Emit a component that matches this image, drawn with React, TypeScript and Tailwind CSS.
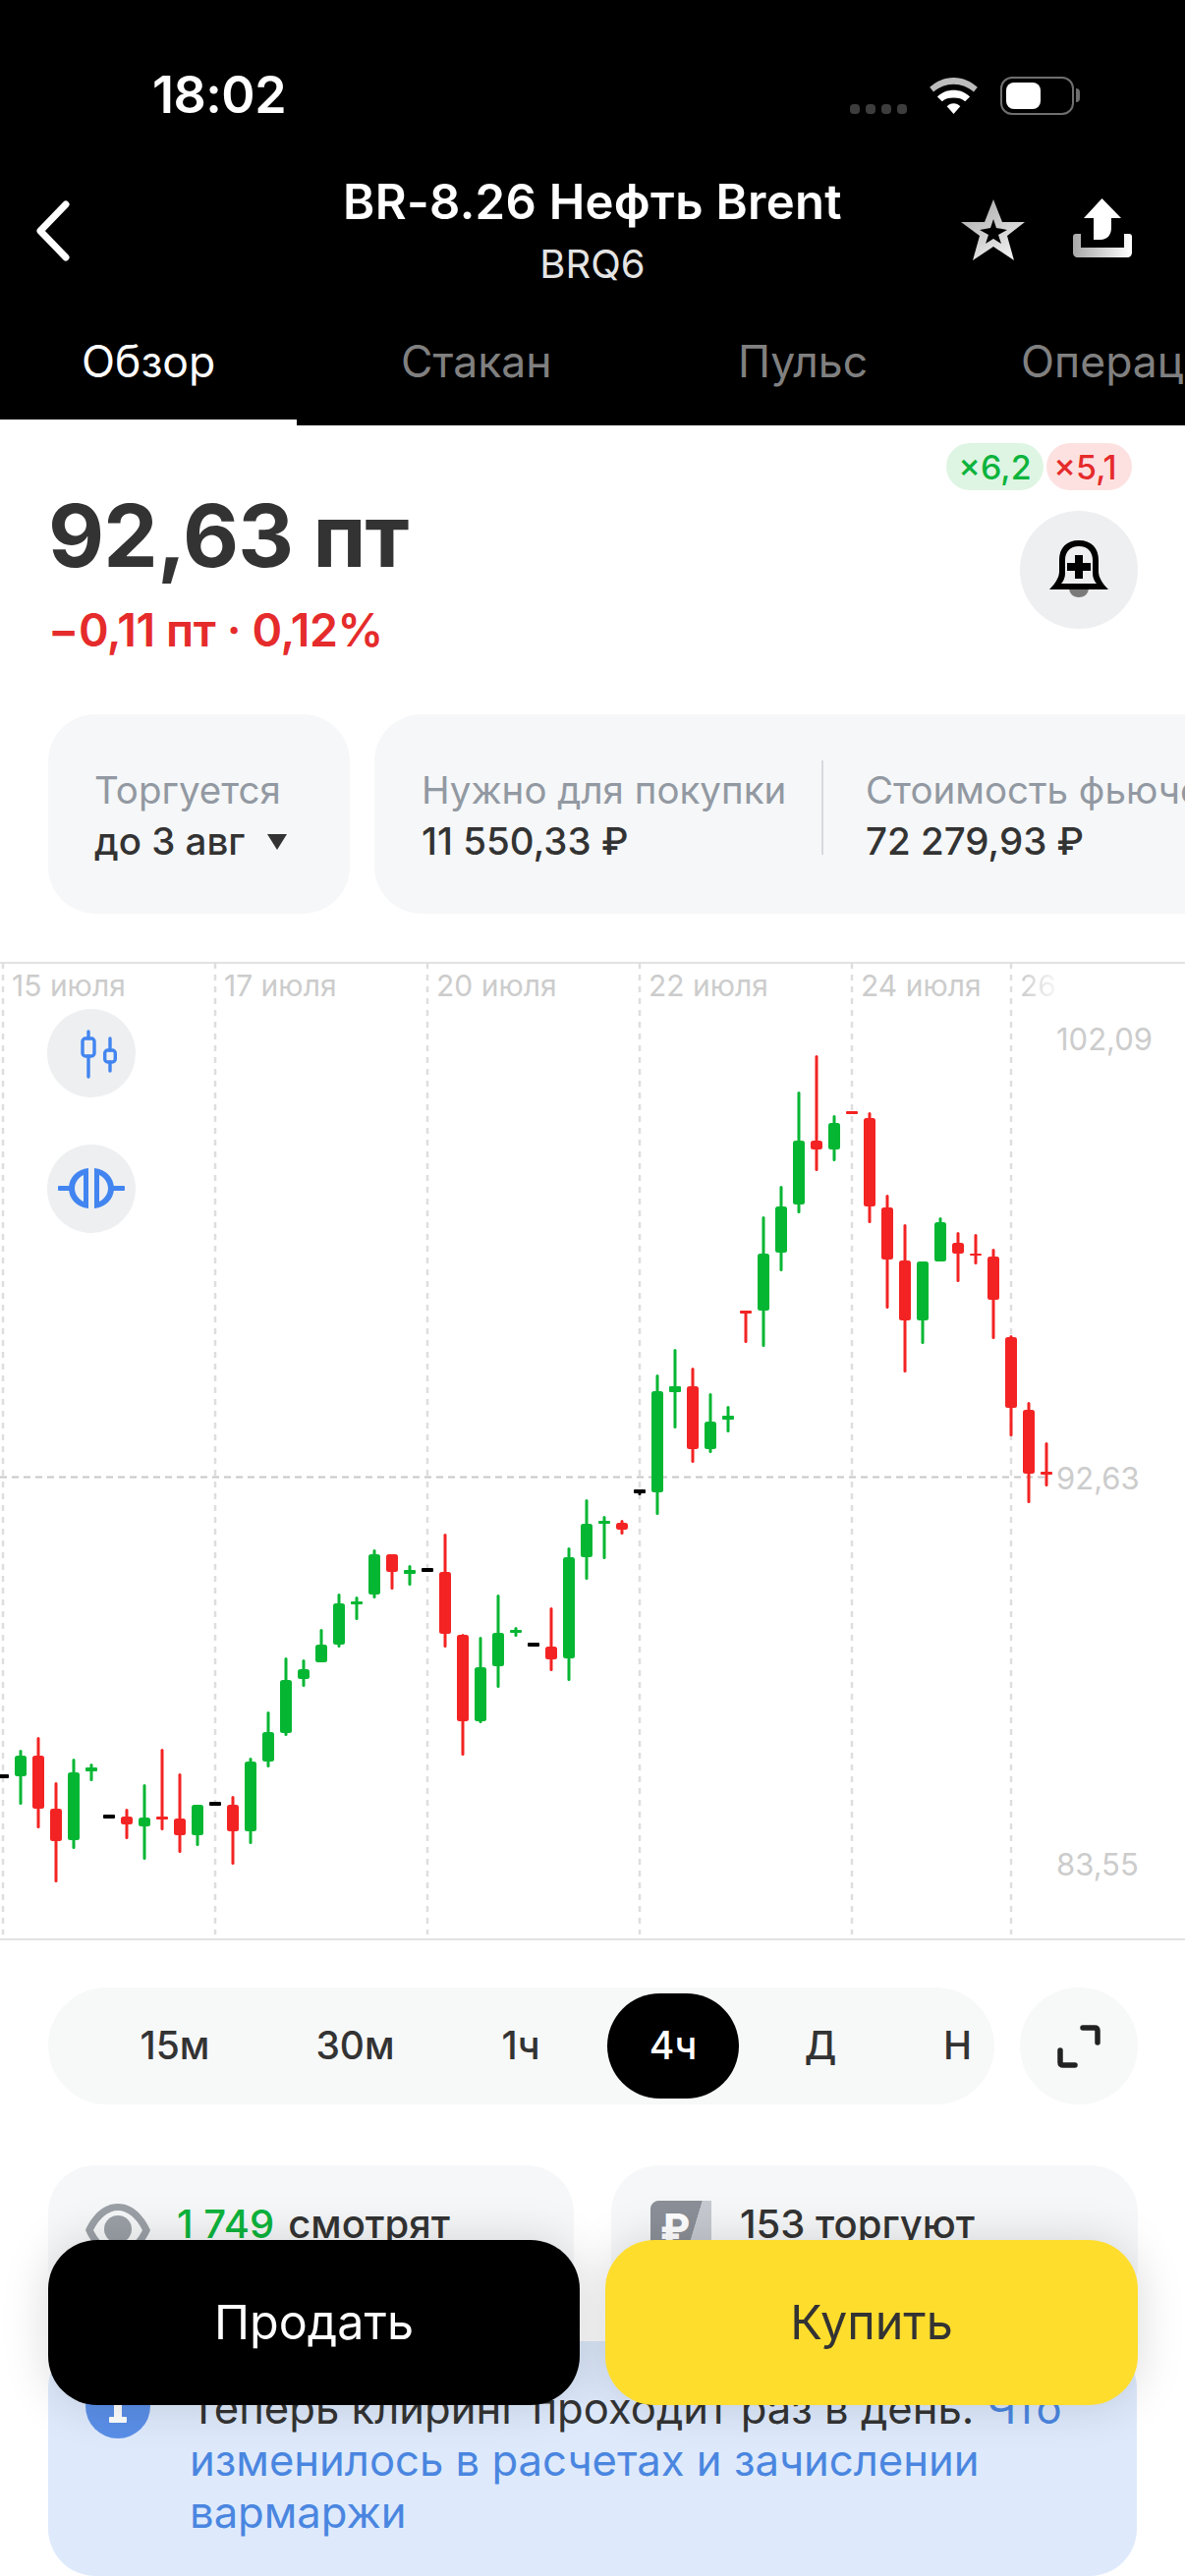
const font = { fontFamily: "Inter, 'Noto Sans', sans-serif" };

type Candle = { x: number; top: number; bottom: number; y1: number; y2: number; color: "g" | "r" | "k" };

const colors = { g: "#05b633", r: "#f32323", k: "#000000" };

// i: index on the 18px candle grid, then wick top/bottom and body top/bottom in page pixels
const raw: [number, number, number, number, number, "g" | "r" | "k"][] = [
  [0, 1808, 1808, 1806, 1810, "k"],
  [1, 1781, 1837, 1787, 1808, "g"],
  [2, 1768, 1861, 1787, 1841, "r"],
  [3, 1814, 1916, 1841, 1874, "r"],
  [4, 1790, 1882, 1804, 1873, "g"],
  [5, 1795, 1813, 1799, 1803, "g"],
  [6, 1849, 1849, 1847, 1851, "k"],
  [7, 1841, 1872, 1849, 1857, "r"],
  [8, 1816, 1893, 1850, 1859, "g"],
  [9, 1780, 1863, 1849, 1852, "r"],
  [10, 1805, 1886, 1851, 1868, "r"],
  [11, 1837, 1879, 1837, 1868, "g"],
  [12, 1836, 1836, 1834, 1838, "k"],
  [13, 1828, 1898, 1837, 1864, "r"],
  [14, 1789, 1877, 1793, 1864, "g"],
  [15, 1742, 1799, 1763, 1793, "g"],
  [16, 1687, 1767, 1710, 1764, "g"],
  [17, 1689, 1717, 1699, 1709, "g"],
  [18, 1658, 1692, 1674, 1692, "g"],
  [19, 1622, 1677, 1632, 1674, "g"],
  [20, 1625, 1649, 1630, 1633, "g"],
  [21, 1577, 1627, 1582, 1623, "g"],
  [22, 1582, 1618, 1582, 1600, "r"],
  [23, 1593, 1614, 1598, 1602, "g"],
  [24, 1598, 1598, 1596, 1600, "k"],
  [25, 1561, 1677, 1600, 1663, "r"],
  [26, 1663, 1787, 1664, 1752, "r"],
  [27, 1666, 1754, 1697, 1752, "g"],
  [28, 1623, 1718, 1662, 1696, "g"],
  [29, 1656, 1666, 1659, 1662, "g"],
  [30, 1674, 1674, 1672, 1676, "k"],
  [31, 1636, 1701, 1676, 1689, "r"],
  [32, 1575, 1711, 1585, 1688, "g"],
  [33, 1526, 1608, 1551, 1585, "g"],
  [34, 1543, 1587, 1548, 1551, "g"],
  [35, 1547, 1562, 1550, 1557, "r"],
  [36, 1517, 1522, 1516, 1520, "k"],
  [37, 1399, 1542, 1416, 1519, "g"],
  [38, 1373, 1454, 1411, 1417, "g"],
  [39, 1392, 1489, 1411, 1475, "r"],
  [40, 1418, 1479, 1447, 1475, "g"],
  [41, 1431, 1458, 1441, 1445, "g"],
  [42, 1335, 1367, 1334, 1337, "r"],
  [43, 1238, 1371, 1276, 1334, "g"],
  [44, 1207, 1294, 1228, 1275, "g"],
  [45, 1111, 1235, 1161, 1226, "g"],
  [46, 1074, 1192, 1161, 1170, "r"],
  [47, 1135, 1182, 1143, 1170, "g"],
  [48, 1132, 1132, 1131, 1134, "r"],
  [49, 1132, 1245, 1138, 1228, "r"],
  [50, 1216, 1332, 1229, 1282, "r"],
  [51, 1246, 1397, 1283, 1344, "r"],
  [52, 1284, 1368, 1284, 1344, "g"],
  [53, 1239, 1284, 1244, 1284, "g"],
  [54, 1254, 1305, 1265, 1276, "r"],
  [55, 1256, 1287, 1276, 1278, "r"],
  [56, 1271, 1363, 1279, 1323, "r"],
  [57, 1359, 1462, 1361, 1433, "r"],
  [58, 1427, 1530, 1435, 1500, "r"],
  [59, 1468, 1513, 1498, 1501, "r"],
];

const candles: Candle[] = raw.map(([i, top, bottom, y1, y2, color]) => ({ x: 3 + i * 18, top, bottom, y1, y2, color }));

const gridX = [3, 219, 435, 651, 867, 1029];

function Chart() {
  return (
    <svg viewBox="0 979 1206 996" className="block h-[996px] w-[1206px]">
      <line x1={0} x2={1206} y1={980} y2={980} stroke="#e2e2e2" strokeWidth="2" />
      <line x1={0} x2={1206} y1={1974} y2={1974} stroke="#e2e2e2" strokeWidth="2" />
      {gridX.map((x) => (
        <line key={x} x1={x} x2={x} y1={980} y2={1969} stroke="#dedede" strokeWidth="2.5" strokeDasharray="6 6" />
      ))}
      <line x1={0} x2={1066} y1={1503.5} y2={1503.5} stroke="#c8c8c8" strokeWidth="2" strokeDasharray="7 5" />
      {candles.map((c) => (
        <g key={c.x}>
          {c.bottom > c.top && <rect x={c.x - 1.5} y={c.top} width={3} height={c.bottom - c.top} rx={1.5} fill={colors[c.color]} />}
          <rect x={c.x - 6} y={c.y1} width={12} height={c.y2 - c.y1} rx={c.y2 - c.y1 > 6 ? 2.5 : 1} fill={colors[c.color]} />
        </g>
      ))}
    </svg>
  );
}

function CandlesIcon() {
  return (
    <svg viewBox="0 0 60 60" className="h-[60px] w-[60px]" fill="none" stroke="#4285f0" strokeWidth="3.4" strokeLinecap="round">
      <path d="M27 8v7M27 33v21" />
      <rect x="21" y="15" width="12" height="18" rx="3" />
      <path d="M49 15v12M49 39v9" />
      <rect x="43.7" y="27" width="10.6" height="12" rx="3" />
    </svg>
  );
}

function SplitIcon() {
  return (
    <svg viewBox="0 0 76 60" className="h-[60px] w-[76px]" fill="#4285f0">
      <rect x="4" y="27" width="14" height="5" rx="1" />
      <rect x="58" y="27" width="14" height="5" rx="1" />
      <path fillRule="evenodd" d="M35 9v41c-12-1-20-10-20-20.500S23 10 35 9Zm-5 7c-5 2-9 8-9 13.500s4 11.500 9 13.500V16Z" />
      <path fillRule="evenodd" d="M41 9v41c12-1 20-10 20-20.500S53 10 41 9Zm5 7c5 2 9 8 9 13.500s-4 11.500-9 13.500V16Z" />
    </svg>
  );
}

function StatusIcons() {
  return (
    <div className="flex items-start">
      <div className="mt-[28px] flex gap-[6px]">
        {[0, 1, 2, 3].map((i) => (
          <span key={i} className="h-[10px] w-[10px] rounded-[4px] bg-[#3d3d3d]" />
        ))}
      </div>
      <svg viewBox="0 0 50 38" className="ml-[22px] mt-[1px] h-[37px] w-[51px]" fill="white">
        <path d="M25 0c10 0 18 4 25 10l-4 5C40 10 33 7 25 7S10 10 4 15L0 10C7 4 15 0 25 0Z" fill="#bcbcbc" />
        <path d="M25 13c6 0 12 2 17 7l-5 5c-3-3-7-4-12-4s-9 1-12 4l-5-5c5-5 11-7 17-7Z" />
        <path d="M25 27c3 0 5 1 7 3l-7 8-7-8c2-2 4-3 7-3Z" />
      </svg>
      <div className="relative ml-[22px] h-[39px] w-[75px] rounded-[12px] border-2 border-[#6f6f6f]">
        <div className="ml-[4px] mt-[4px] h-[27px] w-[35px] rounded-[8px] bg-white" />
        <div className="absolute left-[75px] top-[10px] h-[14px] w-[4px] rounded-r-full bg-[#6f6f6f]" />
      </div>
    </div>
  );
}

function Header() {
  return (
    <div className="h-[433px] bg-black text-white">
      <div className="flex h-[180px] items-start justify-between pl-[155px] pr-[113px] pt-[70px]">
        <span className="text-[52px] font-semibold leading-[54px] tracking-[-0.5px]">18:02</span>
        <div className="pt-[8px]">
          <StatusIcons />
        </div>
      </div>
      <div className="relative flex h-[130px] flex-col items-center">
        <span className="text-[49px] font-semibold leading-[52px] tracking-[0.3px]">BR-8.26 Нефть Brent</span>
        <span className="mt-[15px] text-[40px] leading-[44px] text-[#e4e4e4]">BRQ6</span>
        <svg viewBox="0 0 36 62" className="absolute left-[35px] top-[24px] h-[62px] w-[36px]" fill="none" stroke="white" strokeWidth="7" strokeLinecap="round" strokeLinejoin="round">
          <path d="M32 4 6 31l26 27" />
        </svg>
        <svg viewBox="0 0 65 62" className="absolute left-[978px] top-[23px] h-[62px] w-[65px]">
          <defs>
            <linearGradient id="starFill" x1="0" y1="0" x2="0.6" y2="1">
              <stop offset="0" stopColor="#a4a4a4" />
              <stop offset="1" stopColor="#eeeeee" />
            </linearGradient>
          </defs>
          <path d="M33 0 42 23 65 23 47 37 54 62 33 48 12 62 19 37 0 23 24 23Z" fill="url(#starFill)" />
          <path d="M33 20 36 29 47 31 38 36 41 45 33 40 25 45 28 36 19 31 30 29Z" fill="black" />
        </svg>
        <svg viewBox="0 0 60 60" className="absolute left-[1092px] top-[22px] h-[60px] w-[60px]">
          <defs>
            <linearGradient id="trayFill" x1="0" y1="0" x2="1" y2="0">
              <stop offset="0" stopColor="#a8a8a8" />
              <stop offset="1" stopColor="#ffffff" />
            </linearGradient>
          </defs>
          <path d="M29.500 0 49 20H39V30C39 37 35 42 28 42H21V20H11Z" fill="white" />
          <path d="M3 36h5v14h44V36h5c2 0 3 1 3 3v16c0 3-2 5-5 5H5c-3 0-5-2-5-5V39c0-2 1-3 3-3Z" fill="url(#trayFill)" />
        </svg>
      </div>
      <div className="flex h-[117px] whitespace-nowrap pl-[83px] text-[44.5px] leading-[116px] text-[#808080]">
        <span className="w-[325px] shrink-0 text-white">Обзор</span>
        <span className="w-[343px] shrink-0">Стакан</span>
        <span className="w-[288px] shrink-0">Пульс</span>
        <span className="shrink-0">Операции</span>
      </div>
      <div className="h-[6px] w-[302px] bg-white" />
    </div>
  );
}

function PriceBlock() {
  return (
    <div className="relative h-[294px] bg-white">
      <div className="absolute left-[963px] top-[18px] flex gap-[3px] text-[34px] font-medium">
        <span className="flex h-[48px] w-[99px] items-center justify-center rounded-[24px] bg-[#def5e3] text-[#0cb33c]">×6,2</span>
        <span className="flex h-[48px] w-[87px] items-center justify-center rounded-[24px] bg-[#fde1e1] pr-[8px] text-[#e52b2b]">×5,1</span>
      </div>
      <div className="flex items-start justify-between pl-[49px] pr-[48px]">
        <div className="flex flex-col pt-[62px]">
          <span className="text-[88px] font-bold leading-[100px] tracking-[-0.8px] text-[#333333]">92,63 пт</span>
          <span className="mt-[21px] text-[46.5px] font-semibold leading-[50px] tracking-[-0.4px] text-[#e52b2b]">−0,11 пт · 0,12%</span>
        </div>
        <div className="mt-[87px] flex h-[120px] w-[120px] items-center justify-center rounded-full bg-[#eeeff1]">
          <svg viewBox="0 0 60 60" className="h-[60px] w-[60px]">
            <path d="M20 48h20c0 6-4 10-10 10s-10-4-10-10Z" fill="#7a7a7a" />
            <path fillRule="evenodd" d="M30 0c13 0 20 8 20 20v12c0 6 5 13 10 18H0c5-5 10-12 10-18V20C10 8 17 0 30 0Zm0 6c-9 0-14 6-14 14v14c0 4-2 8-4 10h36c-2-2-4-6-4-10V20c0-8-5-14-14-14Z" fill="#000000" />
            <path d="M26 15h8v8h8v8h-8v8h-8v-8h-8v-8h8Z" fill="#000000" />
          </svg>
        </div>
      </div>
    </div>
  );
}

function InfoCards() {
  return (
    <div className="flex h-[252px] gap-[25px] overflow-hidden bg-white pl-[49px] text-[38.5px] leading-[44px]">
      <div className="flex h-[203px] w-[307px] shrink-0 flex-col rounded-[48px] bg-[#f6f7f8] pl-[47px] pt-[55px]">
        <span className="text-[#9299a2]">Торгуется</span>
        <span className="mt-[8px] flex items-center font-medium text-[#333333]">
          до 3 авг
          <svg viewBox="0 0 22 18" className="ml-[22px] mt-[2px] h-[18px] w-[22px]" fill="#333333">
            <path d="M1 1h20L11 17Z" />
          </svg>
        </span>
      </div>
      <div className="flex h-[203px] w-[900px] shrink-0 items-start rounded-[48px] bg-[#f6f7f8] pl-[48px] pt-[55px]">
        <div className="flex w-[407px] shrink-0 flex-col">
          <span className="whitespace-nowrap text-[#9299a2]">Нужно для покупки</span>
          <span className="mt-[8px] font-medium text-[#333333]">11 550,33 ₽</span>
        </div>
        <div className="mt-[-8px] h-[96px] w-[2px] shrink-0 bg-[#d6d9dd]" />
        <div className="flex flex-col whitespace-nowrap pl-[43px]">
          <span className="text-[#9299a2]">Стоимость фьючерса</span>
          <span className="mt-[8px] font-medium text-[#333333]">72 279,93 ₽</span>
        </div>
      </div>
    </div>
  );
}

function ChartBlock() {
  const dates = ["15 июля", "17 июля", "20 июля", "22 июля", "24 июля"];
  return (
    <div className="relative h-[996px] bg-white">
      <Chart />
      <div className="absolute left-[12px] top-[6px] flex text-[30px] leading-[36px] text-[#cccccc]">
        {dates.map((d, i) => (
          <span key={d} className={i === 4 ? "w-[162px]" : "w-[216px]"}>
            {d}
          </span>
        ))}
        <span className="w-[44px] overflow-hidden bg-gradient-to-r from-[#cccccc] to-white bg-clip-text text-transparent">26</span>
      </div>
      <div className="absolute left-[48px] top-[48px] flex flex-col gap-[48px]">
        <div className="flex h-[90px] w-[90px] items-center justify-center rounded-full bg-[#edeff1]">
          <CandlesIcon />
        </div>
        <div className="flex h-[90px] w-[90px] items-center justify-center rounded-full bg-[#edeff1]">
          <SplitIcon />
        </div>
      </div>
      <span className="absolute left-[1075px] top-[61px] text-[31px] leading-[36px] text-[#cccccc]">102,09</span>
      <span className="absolute left-[1075px] top-[508px] text-[31px] leading-[36px] text-[#cccccc]">92,63</span>
      <span className="absolute left-[1075px] top-[901px] text-[31px] leading-[36px] text-[#cccccc]">83,55</span>
    </div>
  );
}

function Periods() {
  return (
    <div className="flex gap-[26px] bg-white pl-[49px] pt-[48px]">
      <div className="flex h-[119px] w-[963px] items-center overflow-hidden whitespace-nowrap rounded-[60px] bg-[#f7f8f8] pl-[41px] text-center text-[39px] font-medium text-[#333333]">
        <span className="w-[176px] shrink-0">15м</span>
        <span className="w-[191px] shrink-0">30м</span>
        <span className="w-[146px] shrink-0">1ч</span>
        <span className="ml-[15px] flex h-[107px] w-[134px] shrink-0 items-center justify-center rounded-[54px] bg-black text-white">4ч</span>
        <span className="w-[166px] shrink-0">Д</span>
        <span className="w-[113px] shrink-0">Н</span>
      </div>
      <div className="flex h-[119px] w-[120px] items-center justify-center rounded-full bg-[#f7f8f8]">
        <svg viewBox="0 0 44 44" className="h-[44px] w-[44px]" fill="none" stroke="#222222" strokeWidth="5.500" strokeLinecap="round" strokeLinejoin="round">
          <path d="M26 3h12c2 0 3 1 3 3v12M18 41H6c-2 0-3-1-3-3V26" />
        </svg>
      </div>
    </div>
  );
}

function Stats() {
  return (
    <div className="flex gap-[38px] bg-white pl-[49px] pt-[62px] text-[40px] font-medium leading-[46px] text-[#333333]">
      <div className="flex h-[150px] w-[535px] items-start whitespace-nowrap rounded-[48px] bg-[#f6f7f8] pl-[38px] pt-[37px]">
        <svg viewBox="0 0 66 54" className="mt-[2px] h-[54px] w-[66px]" fill="#9aa0a6">
          <path fillRule="evenodd" d="M33 0c14 0 26 11 33 27-7 16-19 27-33 27S7 43 0 27C7 11 19 0 33 0Zm0 7C23 7 14 15 8 27c6 12 15 20 25 20s19-8 25-20C52 15 43 7 33 7Z" />
          <circle cx="33" cy="26" r="14" />
        </svg>
        <span className="ml-[27px] text-[#0cb33c]">1 749</span>
        <span className="ml-[14px]">смотрят</span>
      </div>
      <div className="flex h-[150px] w-[536px] items-start whitespace-nowrap rounded-[48px] bg-[#f6f7f8] pl-[40px] pt-[37px]">
        <svg viewBox="0 0 62 60" className="mt-[-1px] h-[60px] w-[62px]">
          <path d="M8 0h45L35 60H8c-4 0-8-3-8-8V8c0-4 4-8 8-8Z" fill="#8b8f97" />
          <path d="M53 0h9v52c0 5-3 8-8 8H35Z" fill="#c6cad0" />
          <text x="25" y="42" textAnchor="middle" fontSize="40" fontWeight="800" fill="white">₽</text>
        </svg>
        <span className="ml-[29px]">153 торгуют</span>
      </div>
    </div>
  );
}

function Notice() {
  return (
    <div className="bg-white px-[49px] pt-[29px]">
      <div className="flex h-[239px] items-start rounded-[48px] bg-[#deeafc] pl-[38px] pt-[42px]">
        <svg viewBox="0 0 66 66" className="mt-[-9px] h-[66px] w-[66px] shrink-0" fill="#5a8fe8">
          <circle cx="33" cy="33" r="33" />
          <rect x="29" y="28" width="8" height="20" fill="white" />
          <rect x="24" y="44" width="18" height="6" rx="1" fill="white" />
        </svg>
        <p className="ml-[40px] w-[920px] text-[43.6px] leading-[53px] text-[#333333]">
          Теперь клиринг проходит раз в день. <span className="text-[#4a86e0]">Что изменилось в расчетах и зачислении вармаржи</span>
        </p>
      </div>
    </div>
  );
}

export default function App() {
  return (
    <div className="relative h-[2622px] w-[1206px] overflow-hidden bg-white" style={font}>
      <Header />
      <PriceBlock />
      <InfoCards />
      <ChartBlock />
      <Periods />
      <Stats />
      <Notice />
      <div className="absolute left-[49px] right-[48px] top-[2280px] flex gap-[26px] text-[48.5px] leading-none">
        <button className="flex h-[168px] w-[541px] items-center justify-center rounded-[50px] bg-black text-white shadow-[0_0_48px_rgba(0,0,0,0.15)]">Продать</button>
        <button className="flex h-[168px] w-[542px] items-center justify-center rounded-[50px] bg-[#ffdd2d] text-[#333333] shadow-[0_0_48px_rgba(0,0,0,0.15)]">Купить</button>
      </div>
    </div>
  );
}
